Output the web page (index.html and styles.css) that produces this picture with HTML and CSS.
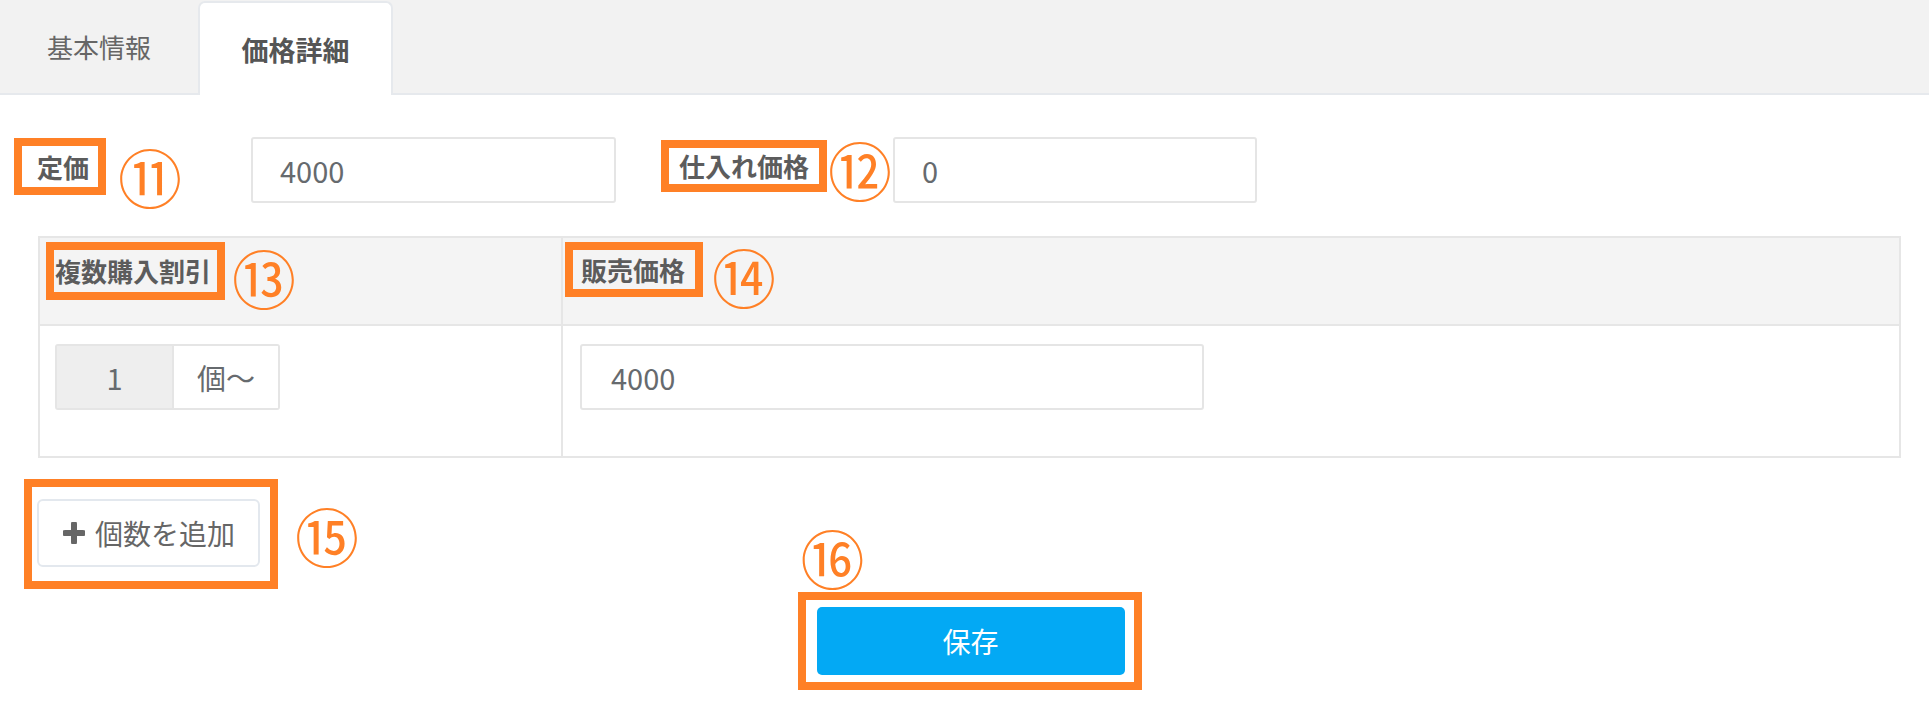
FILE: index.html
```html
<!DOCTYPE html>
<html lang="ja">
<head>
<meta charset="utf-8">
<title>価格詳細</title>
<link rel="stylesheet" href="styles.css">
</head>
<body>
<div class="tabs">
  <div class="tab">基本情報</div>
  <div class="tab active">価格詳細</div>
</div>
<div class="main">
  <div class="row1">
    <span class="label mark m-teika">定価</span>
    <span class="num n11">⑪</span>
    <div class="input in1">4000</div>
    <span class="label mark m-shiire">仕入れ価格</span>
    <span class="num n12">⑫</span>
    <div class="input in2">0</div>
  </div>

  <div class="table">
    <div class="th th1">
      <span class="label mark m-fukusu">複数購入割引</span>
      <span class="num n13">⑬</span>
    </div>
    <div class="th th2">
      <span class="label mark m-hanbai">販売価格</span>
      <span class="num n14">⑭</span>
    </div>
    <div class="td td1">
      <div class="group">
        <div class="g-val">1</div>
        <div class="g-add">個〜</div>
      </div>
    </div>
    <div class="td td2">
      <div class="input in3">4000</div>
    </div>
  </div>

  <div class="addrow">
    <div class="mark addmark">
      <button class="btn-add"><svg class="plus" width="22" height="22" viewBox="0 0 22 22"><path d="M11 2v18M2 11h18" stroke="#666" stroke-width="6" stroke-linecap="round"/></svg><span>個数を追加</span></button>
    </div>
    <span class="num n15">⑮</span>
  </div>

  <div class="savewrap">
    <span class="num n16">⑯</span>
    <div class="mark savemark">
      <button class="btn-save">保存</button>
    </div>
  </div>
</div>
</body>
</html>
```
FILE: styles.css
```css
html, body {
  margin: 0;
  padding: 0;
  background: #ffffff;
}
body {
  font-family: "Noto Sans CJK JP", "Noto Sans", sans-serif;
  color: #666666;
  width: 1929px;
  height: 702px;
  overflow: hidden;
}
.tabs {
  display: flex;
  align-items: flex-end;
  height: 93px;
  background: #f2f2f2;
  border-bottom: 2px solid #e6e9ed;
}
.tab {
  width: 198px;
  height: 93px;
  display: flex;
  align-items: center;
  justify-content: center;
  font-size: 26px;
  color: #666;
}
.tab.active {
  width: 191px;
  height: 92px;
  margin-bottom: -2px;
  background: #fff;
  border: 2px solid #e6e9ed;
  border-bottom: none;
  border-radius: 7px 7px 0 0;
  font-weight: bold;
  font-size: 27px;
  color: #555;
}
.main {
  padding: 0 28px 0 38px;
}
.mark {
  border: 8px solid #ff8026;
}
.label {
  display: inline-block;
  font-size: 26px;
  font-weight: bold;
  color: #5c5c5c;
  white-space: nowrap;
}
.num {
  display: inline-flex;
  align-items: center;
  justify-content: center;
  width: 60px;
  height: 60px;
  font-size: 64px;
  line-height: 60px;
  color: #ff8026;
  font-family: "Noto Sans CJK JP", sans-serif;
  font-weight: normal;
}
.row1 {
  display: flex;
  align-items: flex-start;
  margin: 42px 0 0 -24px;
}
.m-teika {
  margin-top: 1px;
  padding: 0 9px 0 15px;
  line-height: 41px;
}
.n11 { margin: 8px 0 0 14px; }
.input {
  box-sizing: border-box;
  height: 66px;
  border: 2px solid #e5e5e5;
  border-radius: 3px;
  background: #fff;
  font-size: 29px;
  line-height: 62px;
  padding-left: 27px;
  color: #666a6e;
}
.in1 { width: 365px; margin-left: 71px; }
.m-shiire {
  margin: 3px 0 0 45px;
  padding: 0 10px;
  line-height: 36px;
}
.n12 { margin: 1px 0 0 3px; }
.in2 { width: 364px; margin-left: 3px; }

.table {
  margin-top: 31px;
  border: 2px solid #e6e6e6;
  display: grid;
  grid-template-columns: 523px 1fr;
}
.th {
  background: #f4f4f4;
  border-bottom: 2px solid #e6e6e6;
  height: 88px;
  box-sizing: border-box;
  display: flex;
  align-items: flex-start;
  padding-top: 4px;
}
.th1, .td1 { border-right: 2px solid #e6e6e6; }
.th1 { padding-left: 6px; }
.m-fukusu {
  padding: 0 6px 0 1px;
  line-height: 42px;
}
.n13 { margin: 4px 0 0 9px; }
.th2 { padding-left: 2px; }
.m-hanbai {
  padding: 0 10px 0 8px;
  line-height: 39px;
}
.n14 { margin: 3px 0 0 11px; }
.td {
  padding: 18px 0 46px 15px;
}
.td2 { padding-left: 17px; }
.group {
  display: flex;
  width: 225px;
  height: 66px;
  box-sizing: border-box;
  border: 2px solid #e5e5e5;
  border-radius: 3px;
  font-size: 29px;
  color: #666a6e;
}
.g-val {
  width: 115px;
  background: #eeeeee;
  border-right: 2px solid #e5e5e5;
  display: flex;
  align-items: center;
  justify-content: center;
}
.g-add {
  flex: 1;
  display: flex;
  align-items: center;
  justify-content: center;
  background: #fff;
}
.in3 { width: 624px; padding-left: 29px; }

.addrow {
  display: flex;
  align-items: center;
  margin: 21px 0 0 -14px;
}
.addmark {
  padding: 12px 10px 14px 5px;
}
.btn-add {
  display: flex;
  align-items: center;
  box-sizing: border-box;
  width: 223px;
  height: 68px;
  padding: 0 0 0 24px;
  border: 2px solid #e3e8ee;
  border-radius: 6px;
  background: #fff;
  font-family: "Noto Sans CJK JP", sans-serif;
  font-size: 28px;
  color: #666;
  cursor: pointer;
}
.plus { margin-right: 10px; flex: none; }
.n15 { margin: 0 0 0 19px; }

.savewrap {
  position: relative;
  width: 344px;
  margin: 3px auto 0;
}
.n16 {
  position: absolute;
  left: 5px;
  top: -66px;
}
.savemark {
  padding: 7px 9px 7px 11px;
}
.btn-save {
  display: block;
  width: 308px;
  height: 68px;
  border: none;
  border-radius: 5px;
  background: #03a9f4;
  color: #fff;
  font-family: "Noto Sans CJK JP", sans-serif;
  font-size: 28px;
  cursor: pointer;
}
```
